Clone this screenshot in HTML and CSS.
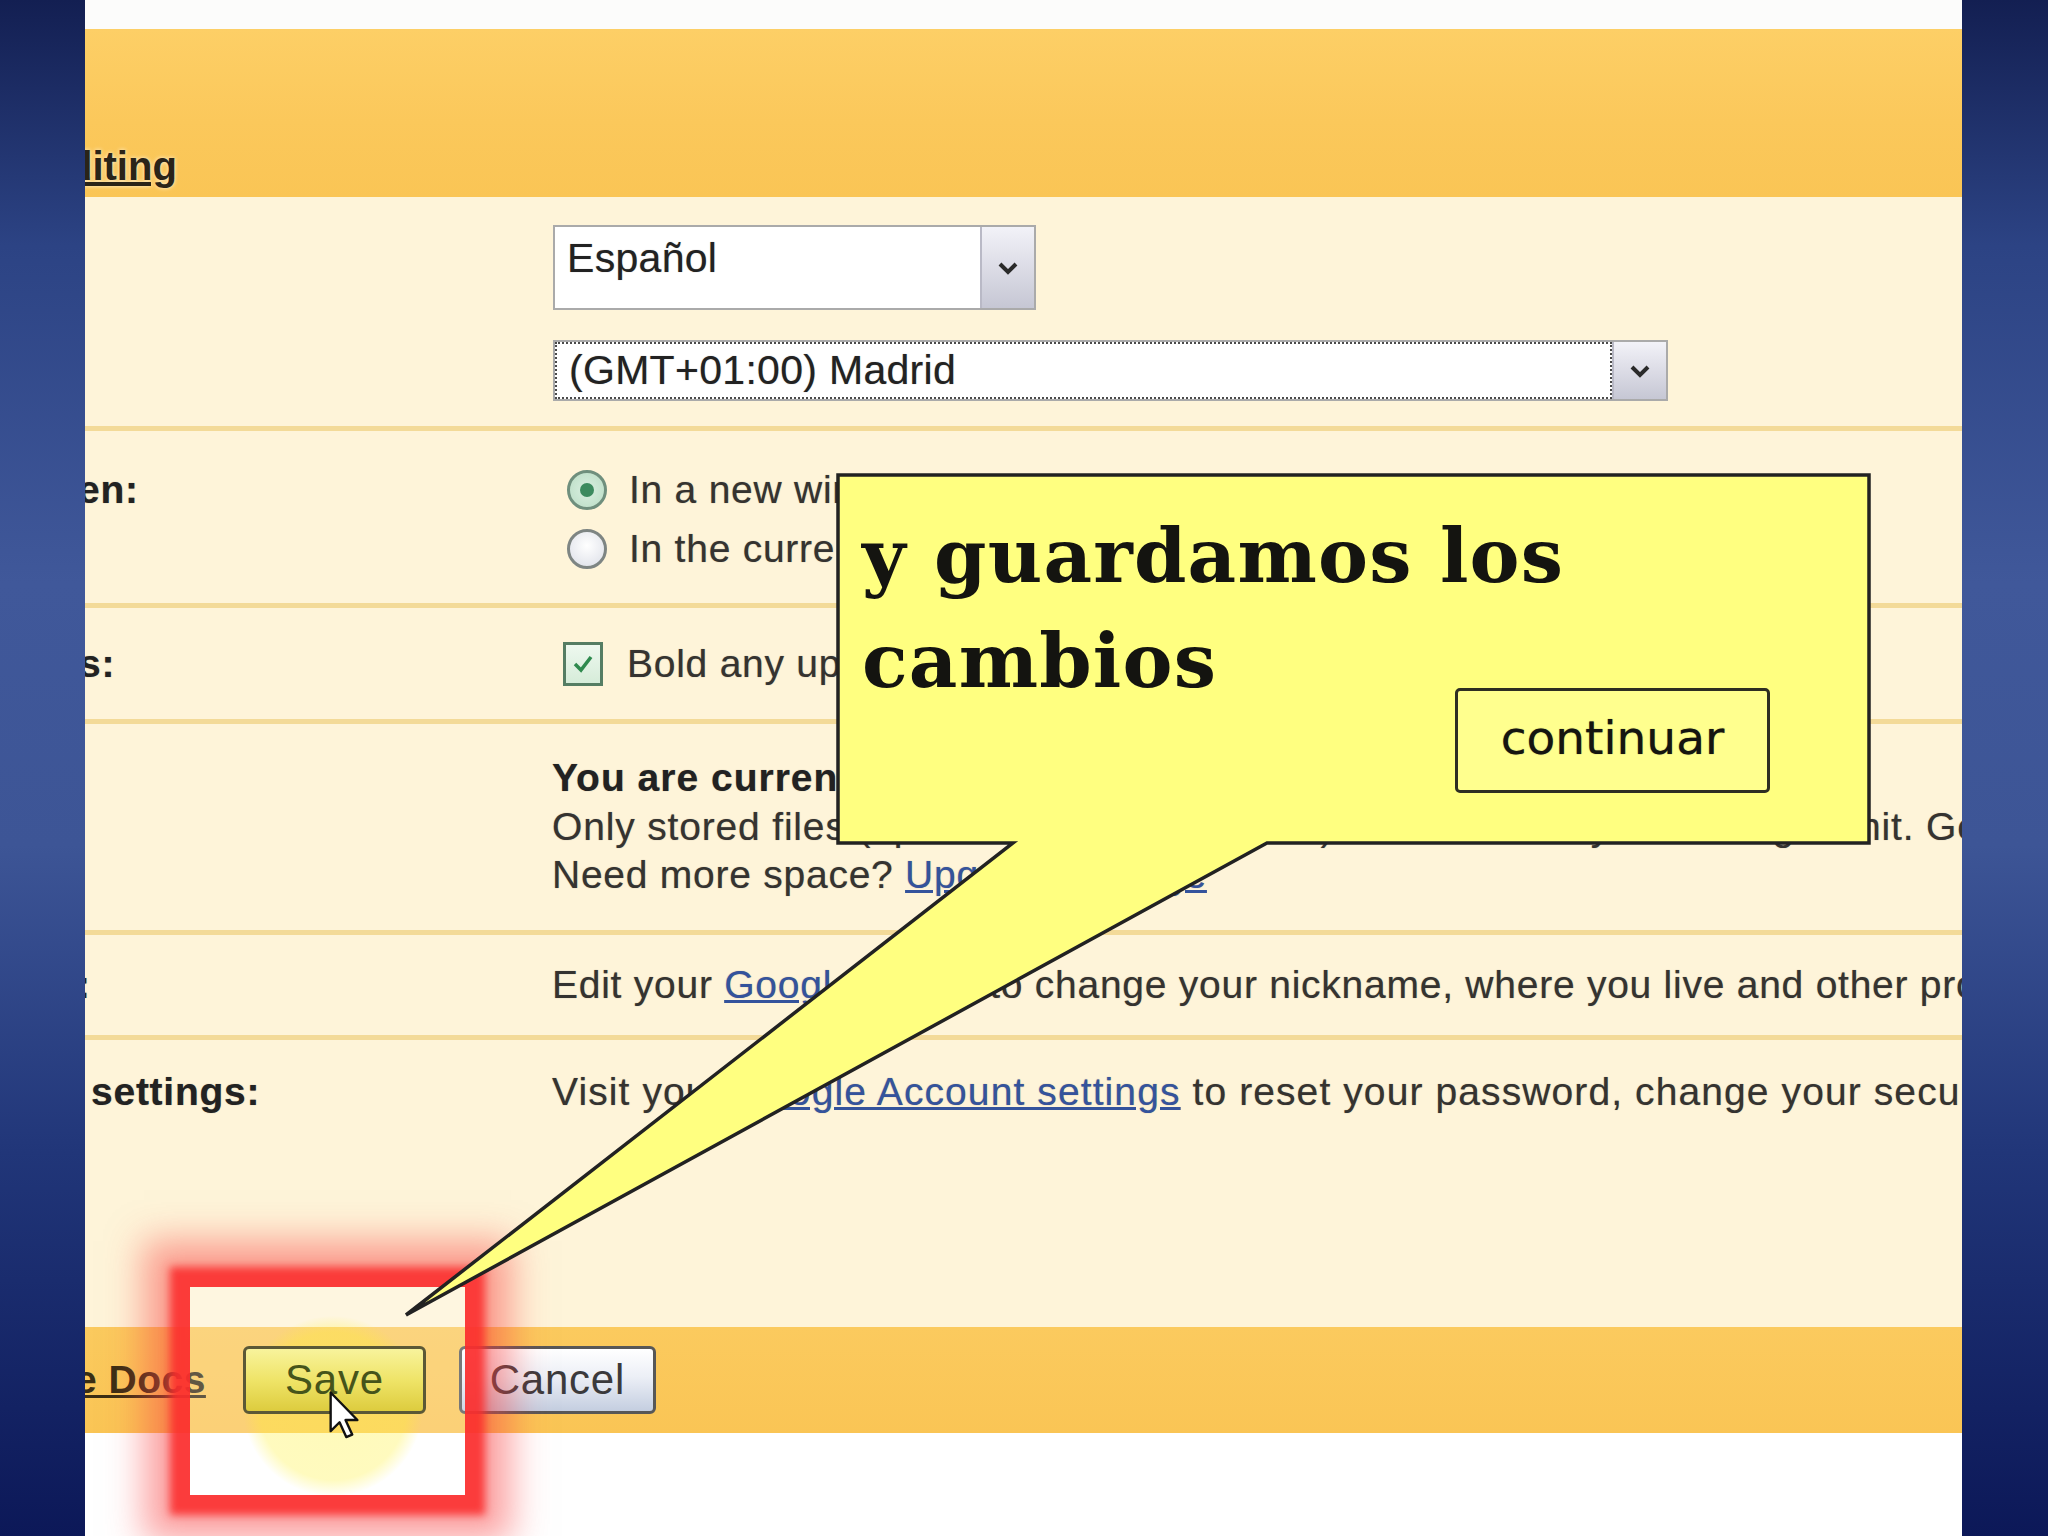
FILE: index.html
```html
<!DOCTYPE html>
<html lang="en">
<head>
<meta charset="utf-8">
<title>Settings</title>
<link rel="stylesheet" href="styles.css">
</head>
<body>
<div class="screen">
  <div class="side side-left"></div>
  <main class="page">
    <div class="topstrip"></div>
    <div class="header"><span class="hdr-link">diting</span></div>
    <div class="settings">
      <div class="row row-lang">
        <div class="label"></div>
        <div class="content stack">
          <div class="select select-lang">
            <span class="select-value">Español</span>
            <span class="select-btn"><svg width="26" height="18" viewBox="0 0 26 18"><path d="M5 5 L13 13 L21 5" fill="none" stroke="#2a2a2a" stroke-width="4"/></svg></span>
          </div>
          <div class="select select-tz">
            <span class="select-value">(GMT+01:00) Madrid</span>
            <span class="select-btn"><svg width="26" height="18" viewBox="0 0 26 18"><path d="M5 5 L13 13 L21 5" fill="none" stroke="#2a2a2a" stroke-width="4"/></svg></span>
          </div>
        </div>
      </div>
      <div class="row row-open">
        <div class="label lbl-open">en:</div>
        <div class="content">
          <div class="opt"><span class="radio radio-on"><span class="dot"></span></span><span>In a new window</span></div>
          <div class="opt"><span class="radio"></span><span>In the current window</span></div>
        </div>
      </div>
      <div class="row row-bold">
        <div class="label lbl-bold">s:</div>
        <div class="content">
          <div class="opt opt-check"><span class="check"><svg width="30" height="30" viewBox="0 0 30 30"><path d="M7 15 L13 21 L23 8" fill="none" stroke="#2f8a4e" stroke-width="3.5"/></svg></span><span>Bold any updated documents in the list</span></div>
        </div>
      </div>
      <div class="row row-storage">
        <div class="label"></div>
        <div class="content">
          <div class="strong">You are currently using 0 MB (0%) of your 1024 MB.</div>
          <div class="limit-line">Only stored files (uploaded files and scans) count toward your storage limit. Get more space.</div>
          <div>Need more space? <a class="link">Upgrade storage</a></div>
        </div>
      </div>
      <div class="row row-profile">
        <div class="label lbl-profile">:</div>
        <div class="content">Edit your <a class="link">Google profile</a> to change your nickname, where you live and other profile information.</div>
      </div>
      <div class="row row-account">
        <div class="label lbl-account">settings:</div>
        <div class="content">Visit your <a class="link">Google Account settings</a> to reset your password, change your security question.</div>
      </div>
    </div>
    <div class="footer">
      <span class="back-link">e Docs</span>
      <span class="btn btn-save">Save</span>
      <span class="btn btn-cancel">Cancel</span>
    </div>
    <div class="bottom"></div>
  </main>
  <div class="side side-right"></div>
</div>

<div class="highlight"></div>
<div class="glow"></div>

<svg class="callout-shape" width="2048" height="1536" viewBox="0 0 2048 1536">
  <path d="M838 475 H1869 V843 H1267 L406 1315 L1013 843 H838 Z" fill="#ffff80" stroke="#222" stroke-width="3.5" stroke-linejoin="miter"/>
</svg>
<div class="callout-text">y guardamos los<br>cambios</div>
<div class="continue">continuar</div>

<svg class="cursor" width="36" height="55" viewBox="0 0 24 37">
  <path d="M1 1 L1 27 L7 21 L11.5 31 L15.5 29.3 L11 19.5 L19 19.5 Z" fill="#fff" stroke="#111" stroke-width="1.6" stroke-linejoin="round"/>
</svg>
</body>
</html>
```

FILE: styles.css
```css
* { box-sizing: border-box; }
html, body { margin: 0; padding: 0; }
body {
  width: 2048px;
  height: 1536px;
  overflow: hidden;
  position: relative;
  font-family: "Liberation Sans", Arial, sans-serif;
  background: #0e1b5a;
}
.screen { display: flex; width: 2048px; height: 1536px; }
.side {
  flex: none;
  height: 100%;
  background: linear-gradient(180deg, #131f52 0%, #2c4384 16%, #40589a 38%, #3d5596 55%, #213679 75%, #0c1858 100%);
}
.side-left { width: 85px; }
.side-right { width: 86px; }

.page {
  flex: none;
  width: 1877px;
  height: 100%;
  overflow: hidden;
  display: flex;
  flex-direction: column;
  background: #fff;
}
.topstrip { flex: none; height: 29px; background: #fcfcfb; }
.header {
  flex: none;
  height: 168px;
  padding-top: 113px;
  background: linear-gradient(180deg, #fdcf66 0%, #fbc85b 55%, #fac555 100%);
}
.hdr-link {
  display: inline-block;
  margin-left: -17px;
  font-size: 40px;
  line-height: 48px;
  font-weight: bold;
  color: #2a2418;
  text-decoration: underline;
  text-shadow: 0 0 4px rgba(255, 255, 255, 0.8);
}

.settings { flex: none; background: #fef4d9; }
.row {
  display: grid;
  grid-template-columns: 467px minmax(0, 1fr);
  border-bottom: 5px solid #f3da98;
  font-size: 39px;
  line-height: 48px;
  letter-spacing: 0.75px;
  color: #353330;
  white-space: nowrap;
  text-shadow: 0 0 1px rgba(40, 36, 30, 0.45);
}
.row-lang { height: 234px; padding-top: 28px; }
.row-open { height: 177px; padding-top: 29px; line-height: 59px; }
.row-bold { height: 116px; padding-top: 32px; }
.row-storage { height: 211px; padding-top: 30px; line-height: 48.5px; }
.row-profile { height: 105px; padding-top: 26px; }
.row-account { height: 287px; padding-top: 28px; border-bottom: none; letter-spacing: 1.1px; }

.label { font-weight: bold; color: #222; }
.lbl-open { margin-left: -7px; }
.lbl-bold { margin-left: -6px; }
.lbl-profile { margin-left: -8px; }
.lbl-account { margin-left: 6px; letter-spacing: 0.75px; }
.content { overflow: visible; }
.stack { display: flex; flex-direction: column; }
.strong { font-weight: bold; color: #222; letter-spacing: 1px; }
.limit-line { letter-spacing: 0.83px; }
.link { color: #34539c; text-decoration: underline; }

.select { display: flex; background: #fff; border: 2px solid #aaaaaa; margin-left: 1px; }
.select-lang { width: 483px; height: 85px; }
.select-tz { width: 1115px; height: 61px; margin-top: 30px; }
.select-value {
  flex: 1;
  padding: 6px 0 0 12px;
  font-size: 41px;
  line-height: 50px;
  color: #222;
  letter-spacing: 0.3px;
}
.select-tz .select-value { border: 2px dotted #4a4a4a; padding: 0 0 0 12px; line-height: 53px; }
.select-btn {
  flex: none;
  width: 54px;
  display: flex;
  align-items: center;
  justify-content: center;
  border-left: 2px solid #b9b9c6;
  background: linear-gradient(180deg, #f2f2f8 0%, #dcdce6 50%, #c6c7d4 100%);
}

.opt { display: flex; align-items: center; gap: 22px; padding-left: 15px; }
.opt-check { padding-left: 11px; gap: 24px; }
.radio {
  flex: none;
  width: 40px;
  height: 40px;
  border-radius: 50%;
  border: 3px solid #7e8583;
  background: radial-gradient(circle at 50% 40%, #ffffff 0%, #e6e8ee 70%, #d2d4dc 100%);
  display: flex;
  align-items: center;
  justify-content: center;
}
.radio-on { border-color: #6f8f7d; background: radial-gradient(circle, #d9efe0 0%, #c3e2cd 70%, #a9cdb6 100%); }
.dot { width: 14px; height: 14px; border-radius: 50%; background: #3b8a5e; }
.check {
  flex: none;
  width: 40px;
  height: 44px;
  border: 3px solid #557d63;
  background: linear-gradient(180deg, #eef8ef, #d6ecd9);
  display: flex;
  align-items: center;
  justify-content: center;
}

.footer {
  flex: none;
  height: 106px;
  display: flex;
  align-items: center;
  background: linear-gradient(180deg, #fbca5e 0%, #fac555 100%);
  font-size: 39px;
}
.back-link {
  margin-left: -10px;
  font-weight: bold;
  color: #3a2e14;
  text-decoration: underline;
  letter-spacing: 0.5px;
}
.btn {
  height: 68px;
  border: 3px solid #5b5836;
  border-radius: 6px;
  font-size: 42px;
  letter-spacing: 0.8px;
  display: flex;
  align-items: center;
  justify-content: center;
}
.btn-save {
  width: 183px;
  margin-left: 37px;
  background: linear-gradient(180deg, #f8f39c 0%, #efe468 50%, #ddcc3e 100%);
  color: #46541a;
  position: relative;
  z-index: 2;
}
.btn-cancel {
  width: 197px;
  margin-left: 33px;
  border-color: #575757;
  background: linear-gradient(180deg, #ffffff 0%, #eceff6 45%, #c4cee0 100%);
  color: #3b3a3c;
}
.bottom { flex: 1; background: #ffffff; }

.highlight {
  position: absolute;
  left: 190px;
  top: 1287px;
  width: 275px;
  height: 208px;
  background: rgba(255, 255, 255, 0.2);
  box-shadow: 0 0 8px 20px rgba(250, 45, 45, 0.88), 0 0 34px 46px rgba(250, 70, 70, 0.5);
}
.glow {
  position: absolute;
  left: 243px;
  top: 1316px;
  width: 180px;
  height: 180px;
  border-radius: 50%;
  background: radial-gradient(circle, rgba(255, 240, 40, 0.32) 0%, rgba(255, 240, 40, 0.3) 58%, rgba(255, 240, 40, 0) 71%);
}
.callout-shape { position: absolute; left: 0; top: 0; }
.callout-text {
  position: absolute;
  left: 862px;
  top: 504px;
  font-family: "DejaVu Serif", "Liberation Serif", serif;
  font-size: 75px;
  font-weight: bold;
  line-height: 105px;
  letter-spacing: 1.2px;
  color: #141410;
  white-space: nowrap;
}
.continue {
  position: absolute;
  left: 1455px;
  top: 688px;
  width: 315px;
  height: 105px;
  border: 3px solid #2e2e22;
  border-radius: 5px;
  background: #ffff8e;
  display: flex;
  align-items: center;
  justify-content: center;
  font-family: "DejaVu Sans", "Liberation Sans", sans-serif;
  font-size: 47px;
  color: #151510;
  padding-bottom: 6px;
  text-shadow: 0 0 1px rgba(0, 0, 0, 0.6);
}
.cursor { position: absolute; left: 329px; top: 1391px; z-index: 3; }
```
